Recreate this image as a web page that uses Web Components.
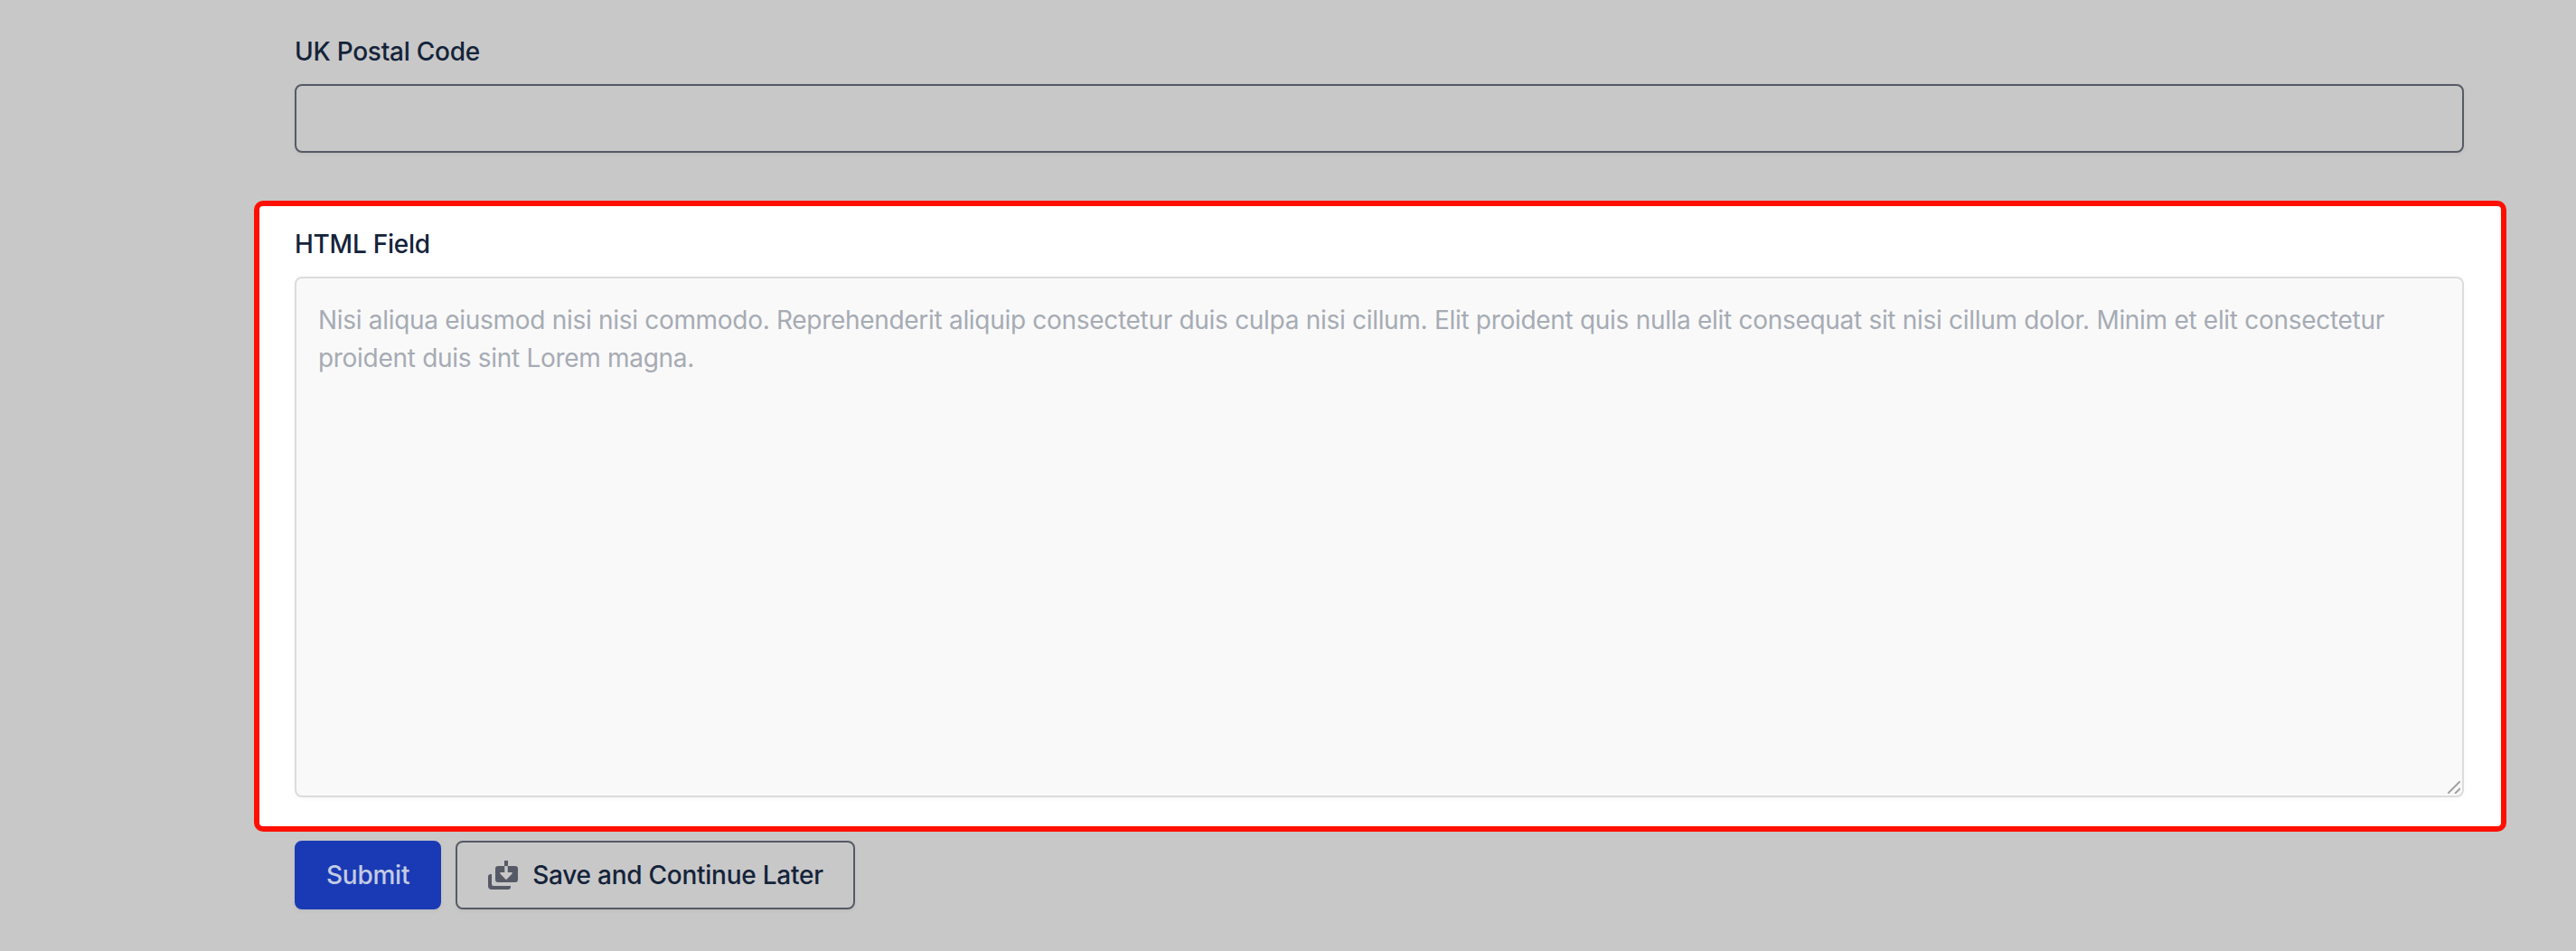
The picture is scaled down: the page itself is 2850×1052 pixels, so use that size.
<!DOCTYPE html>
<html>
<head>
<meta charset="utf-8">
<title>Form</title>
<style>
  html, body { margin: 0; height: 100%; background: #c8c8c8; }
  body { font-family: Inter, "Liberation Sans", sans-serif; color: #14233a; overflow: hidden; }
</style>
</head>
<body>
<form-page>
  <form-field label="UK Postal Code"><text-input></text-input></form-field>
  <highlight-box>
    <form-field label="HTML Field">
      <text-area>Nisi aliqua eiusmod nisi nisi commodo. Reprehenderit aliquip consectetur duis culpa nisi cillum. Elit proident quis nulla elit consequat sit nisi cillum dolor. Minim et elit consectetur proident duis sint Lorem magna.</text-area>
    </form-field>
  </highlight-box>
  <form-actions>
    <ui-button variant="primary">Submit</ui-button>
    <ui-button>
      <svg slot="icon" width="33" height="32" viewBox="0 0 33 32" aria-hidden="true">
        <path fill="#555a66" d="M18 0h4v6h8a3 3 0 0 1 3 3v12a3 3 0 0 1-3 3H11a3 3 0 0 1-3-3V9a3 3 0 0 1 3-3h7z"/>
        <path fill="#c8c8c8" d="M18.300 6h3.400v7H26a.8.800 0 0 1 .6 1.400l-5.800 6.200a1.100 1.100 0 0 1-1.600 0l-5.800-6.200A.8.800 0 0 1 14 13h4.300z"/>
        <path fill="#555a66" d="M0 18a3 3 0 0 1 3-3h1v11a2 2 0 0 0 2 2h19v1a3 3 0 0 1-3 3H4a4 4 0 0 1-4-4z"/>
      </svg>
      Save and Continue Later
    </ui-button>
  </form-actions>
</form-page>

<script>
// pagina: colonna con il margine sinistro del form
class FormPage extends HTMLElement {
  constructor() {
    super();
    this.attachShadow({ mode: 'open' });
  }
  connectedCallback() {
    this.shadowRoot.innerHTML = `
    <style>
      :host { display: flex; flex-direction: column; width: 2400px; padding: 37px 0 0 326px; }
    </style>
    <slot></slot>`;
  }
}

class FormField extends HTMLElement {
  constructor() {
    super();
    this.attachShadow({ mode: 'open' });
  }
  connectedCallback() {
    this.shadowRoot.innerHTML = `
    <style>
      :host { display: block; }
      label { display: block; font-size: 28px; line-height: 40px; font-weight: 500; letter-spacing: -.26px; color: #14233a; margin-bottom: 16px; }
    </style>
    <label></label>
    <slot></slot>`;
    this.shadowRoot.querySelector('label').textContent = this.getAttribute('label');
  }
}

class TextInput extends HTMLElement {
  constructor() {
    super();
    this.attachShadow({ mode: 'open' });
  }
  connectedCallback() {
    this.shadowRoot.innerHTML = `
    <style>
      :host { display: block; }
      input {
        display: block; width: 100%; height: 76px; box-sizing: border-box; margin: 0;
        border: 2px solid #555a66; border-radius: 8px; background: transparent;
        box-shadow: 0 2px 4px rgba(0,0,0,.05); outline: none;
      }
    </style>
    <input type="text">`;
  }
}

class TextArea extends HTMLElement {
  constructor() {
    super();
    this.attachShadow({ mode: 'open' });
  }
  connectedCallback() {
    this.shadowRoot.innerHTML = `
    <style>
      :host { display: block; position: relative; }
      textarea {
        display: block; width: 100%; height: 576px; box-sizing: border-box; margin: 0;
        padding: 25px 24px; border: 2px solid #dcdcdc; border-radius: 8px; resize: none;
        background: #f9f9f9; box-shadow: 0 2px 4px rgba(0,0,0,.03); outline: none;
        font: 400 28px/42px Inter, "Liberation Sans", sans-serif; letter-spacing: -.3px; color: #a6abb4;
      }
      svg { position: absolute; right: 4px; bottom: 4px; pointer-events: none; }
    </style>
    <textarea readonly></textarea>
    <svg width="14" height="14" viewBox="0 0 14 14" aria-hidden="true">
      <path d="M0 14L14 0M8 14l6-6" stroke="#a3a3a3" stroke-width="2" fill="none"/>
    </svg>`;
    this.shadowRoot.querySelector('textarea').textContent = this.textContent;
  }
}

class HighlightBox extends HTMLElement {
  constructor() {
    super();
    this.attachShadow({ mode: 'open' });
  }
  connectedCallback() {
    this.shadowRoot.innerHTML = `
    <style>
      :host {
        display: block; margin: 53px -47px 0 -45px; padding: 22px 41px 32px 39px;
        background: #fff; border: 6px solid #ff0f00; border-radius: 10px;
      }
    </style>
    <slot></slot>`;
  }
}

class FormActions extends HTMLElement {
  constructor() {
    super();
    this.attachShadow({ mode: 'open' });
  }
  connectedCallback() {
    this.shadowRoot.innerHTML = `
    <style>
      :host { display: flex; gap: 16px; margin-top: 10px; }
    </style>
    <slot></slot>`;
  }
}

class UiButton extends HTMLElement {
  constructor() {
    super();
    this.attachShadow({ mode: 'open' });
  }
  connectedCallback() {
    this.shadowRoot.innerHTML = `
    <style>
      :host { display: block; }
      button {
        display: flex; align-items: center; gap: 16px; height: 76px; box-sizing: border-box; margin: 0;
        padding: 0 33px 0 34px; border: 2px solid #555a66; border-radius: 8px; background: transparent;
        font: 500 28px/40px Inter, "Liberation Sans", sans-serif; letter-spacing: -.25px; color: #14233a;
        box-shadow: 0 2px 4px rgba(0,0,0,.05);
      }
      :host([variant=primary]) button { padding: 0 33px; background: #1a3ab5; border-color: #1a3ab5; color: #c3cbe2; }
      ::slotted(svg) { display: block; flex: none; }
    </style>
    <button type="button"><slot name="icon"></slot><span><slot></slot></span></button>`;
  }
}

customElements.define('form-page', FormPage);
customElements.define('form-field', FormField);
customElements.define('text-input', TextInput);
customElements.define('text-area', TextArea);
customElements.define('highlight-box', HighlightBox);
customElements.define('form-actions', FormActions);
customElements.define('ui-button', UiButton);
</script>
</body>
</html>
